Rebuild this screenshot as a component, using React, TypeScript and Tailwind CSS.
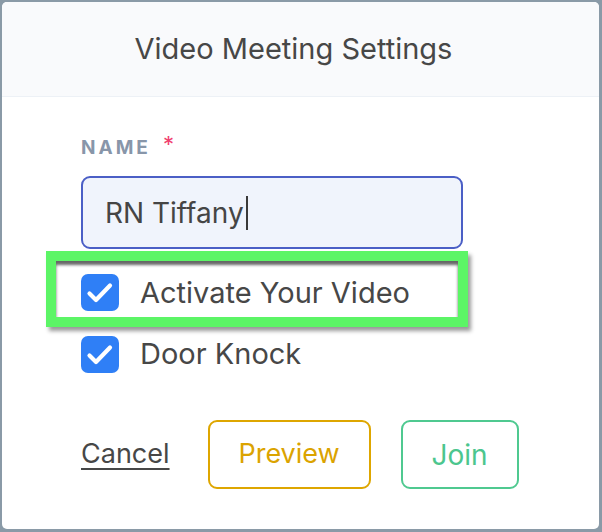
import React, { useState } from 'react';

function Check({ checked, onToggle }: { checked: boolean; onToggle: () => void }) {
  return (
    <button
      onClick={onToggle}
      className={`w-[38px] h-[37px] rounded-[7px] flex items-center justify-center shrink-0 ${checked ? 'bg-[#2f7ff6]' : 'bg-white border-2 border-[#9aa5b4]'}`}
    >
      {checked && (
        <svg width="38" height="37" viewBox="0 0 38 37" fill="none">
          <path d="M8.5 19.5 L15 26 L29 11.5" stroke="white" strokeWidth="4.2" strokeLinecap="round" strokeLinejoin="round" />
        </svg>
      )}
    </button>
  );
}

export default function App() {
  const [name, setName] = useState('RN Tiffany');
  const [video, setVideo] = useState(true);
  const [knock, setKnock] = useState(true);

  return (
    <div className="w-[602px] h-[532px] bg-[#8a9aa7] pl-[2px] pt-[2px] pr-[3px] pb-[3px] font-['Inter',sans-serif]">
      <div className="h-full bg-white rounded-[5px] flex flex-col overflow-hidden">
        <header className="h-[95px] bg-[#f9fafc] border-b border-[#edf1f6] flex items-center justify-center pr-[14px]">
          <h1 className="text-[29px] text-[#474747]">Video Meeting Settings</h1>
        </header>

        <div className="pl-[79px] pt-[41px] flex flex-col">
          <label className="flex items-start gap-[12px] h-[20px]">
            <span className="text-[19px] leading-[20px] font-bold tracking-[3px] text-[#8896a9]">NAME</span>
            <span className="text-[22px] leading-[12px] text-[#f0406e]">*</span>
          </label>

          <div className="mt-[18px] w-[382px] h-[73px] rounded-[9px] border-2 border-[#4b5fc6] bg-[#f0f4fc] flex items-center pl-[22px]">
            <input
              value={name}
              onChange={(e) => setName(e.target.value)}
              className="field-sizing-content min-w-[4px] bg-transparent outline-none text-[28px] text-[#454545] caret-transparent"
            />
            {/* text cursor */}
            <span className="w-[2px] h-[34px] bg-[#3a3a3a] ml-[2px]" />
          </div>

          <div className="relative">
            <div className="flex items-center gap-[21px] h-[37px] mt-[25px]">
              <Check checked={video} onToggle={() => setVideo(!video)} />
              <span className="text-[29px] text-[#474747]">Activate Your Video</span>
            </div>
            {/* highlight annotation */}
            <div className="absolute left-[-35px] top-[2px] w-[422px] h-[76px] border-[10px] border-[#5cf566] shadow-[3px_4px_4px_rgba(0,0,0,0.4),inset_0_4px_3px_rgba(0,0,0,0.6)] pointer-events-none" />
          </div>

          <div className="flex items-center gap-[21px] h-[38px] mt-[24px]">
            <Check checked={knock} onToggle={() => setKnock(!knock)} />
            <span className="text-[29px] text-[#474747]">Door Knock</span>
          </div>

          <div className="flex items-center mt-[47px]">
            <button className="text-[27px] text-[#474747] underline underline-offset-[5px] decoration-2">Cancel</button>
            <button className="ml-[38px] w-[163px] h-[69px] rounded-[9px] border-2 border-[#dea600] text-[27px] text-[#dba300]">Preview</button>
            <button className="ml-[30px] w-[118px] h-[69px] rounded-[9px] border-2 border-[#4fc990] text-[28px] text-[#4cc68e]">Join</button>
          </div>
        </div>
      </div>
    </div>
  );
}
